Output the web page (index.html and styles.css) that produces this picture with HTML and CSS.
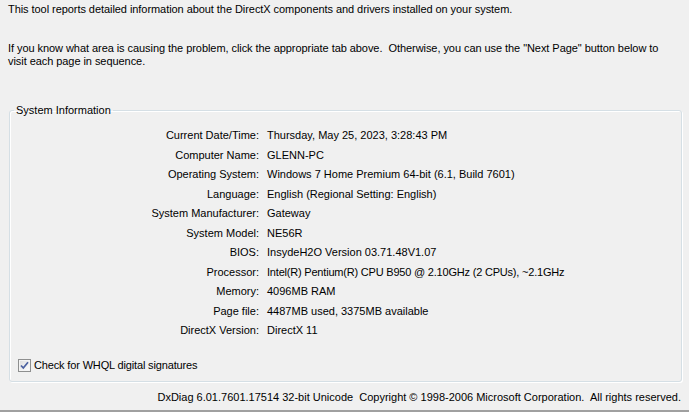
FILE: index.html
```html
<!DOCTYPE html>
<html>
<head>
<meta charset="utf-8">
<link rel="stylesheet" href="styles.css">
</head>
<body>
<div class="page">
  <p class="intro">This tool reports detailed information about the DirectX components and drivers installed on your system.</p>
  <p class="intro second">If you know what area is causing the problem, click the appropriate tab above.&nbsp; Otherwise, you can use the "Next Page" button below to<br>visit each page in sequence.</p>
  <fieldset class="group">
    <legend class="group-title">System Information</legend>
    <dl class="info">
      <dt>Current Date/Time:</dt><dd>Thursday, May 25, 2023, 3:28:43 PM</dd>
      <dt>Computer Name:</dt><dd>GLENN-PC</dd>
      <dt>Operating System:</dt><dd>Windows 7 Home Premium 64-bit (6.1, Build 7601)</dd>
      <dt>Language:</dt><dd>English (Regional Setting: English)</dd>
      <dt>System Manufacturer:</dt><dd>Gateway</dd>
      <dt>System Model:</dt><dd>NE56R</dd>
      <dt>BIOS:</dt><dd>InsydeH2O Version 03.71.48V1.07</dd>
      <dt>Processor:</dt><dd class="tight">Intel(R) Pentium(R) CPU B950 @ 2.10GHz (2 CPUs), ~2.1GHz</dd>
      <dt>Memory:</dt><dd>4096MB RAM</dd>
      <dt>Page file:</dt><dd>4487MB used, 3375MB available</dd>
      <dt>DirectX Version:</dt><dd>DirectX 11</dd>
    </dl>
    <label class="check">
      <span class="box"><svg width="11" height="11" viewBox="0 0 11 11"><path d="M2 5.5 L4.3 8 L9 2.2" fill="none" stroke="#4b61a0" stroke-width="1.7"/></svg></span>
      <span class="check-text">Check for WHQL digital signatures</span>
    </label>
  </fieldset>
  <div class="footer">DxDiag 6.01.7601.17514 32-bit Unicode&nbsp; Copyright © 1998-2006 Microsoft Corporation.&nbsp; All rights reserved.</div>
</div>
</body>
</html>
```
FILE: styles.css
```css
html, body {
  margin: 0;
  padding: 0;
  background: #f0f0f0;
}
body {
  font-family: "Liberation Sans", Arial, sans-serif;
  font-size: 11px;
  line-height: 13px;
  color: #000;
}
.page {
  width: 689px;
  height: 412px;
  box-sizing: border-box;
  padding-top: 3px;
  display: flex;
  flex-direction: column;
}
.intro {
  margin: 0;
  padding-left: 8px;
  letter-spacing: -0.06px;
}
.intro.second {
  margin-top: 26px;
}
.group {
  margin: 36px 0 0 9px;
  width: 673px;
  box-sizing: border-box;
  padding: 0 0 9px 0;
  border: 1px solid #d5dfe5;
  border-radius: 3px;
  box-shadow: inset 1px 1px 0 #fff, 1px 1px 0 #fff;
}
.group-title {
  margin-left: 4px;
  padding: 0 2px;
}
.info {
  margin: 9px 0 0 0;
  display: grid;
  grid-template-columns: 249px auto;
  column-gap: 8px;
  grid-auto-rows: 19.5px;
  align-items: center;
}
.info dt {
  text-align: right;
}
.info dd {
  margin: 0;
}
.info dd.tight {
  letter-spacing: -0.2px;
}
.check {
  margin: 18px 0 0 8px;
  display: flex;
  align-items: center;
  gap: 3px;
}
.check-text {
  letter-spacing: -0.15px;
}
.box {
  width: 11px;
  height: 11px;
  border: 1px solid #8e8f8f;
  background: linear-gradient(135deg, #dcdcdc, #fff);
  display: flex;
  align-items: center;
  justify-content: center;
  box-shadow: inset 0 0 0 1px #f4f4f4;
}
.box svg {
  display: block;
}
.footer {
  margin-top: auto;
  text-align: right;
  padding: 0 8px 6px 0;
  border-bottom: 2px solid #a0a0a0;
}
```
